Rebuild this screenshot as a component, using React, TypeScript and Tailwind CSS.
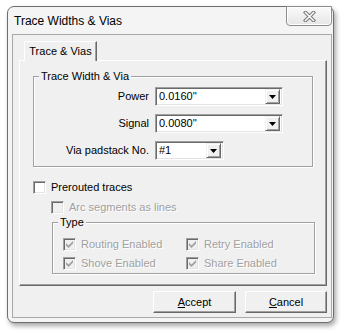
import React from "react"

const font = { fontFamily: '"Liberation Sans", Arial, sans-serif' }

const Combo = ({ value, width }: { value: string; width: string }) => (
  <div className={`${width} h-[19px] flex items-center bg-white border border-t-[#a0a0a0] border-l-[#a0a0a0] border-r-white border-b-white shadow-[inset_1px_1px_0_#696969,inset_-1px_-1px_0_#e3e3e3] pl-[2px] pr-[2px]`}>
    <span className="flex-1 text-[11px] leading-none text-black pl-px">{value}</span>
    <div className="w-[15px] h-[15px] flex items-center justify-center bg-[#f0f0f0] border border-t-[#f0f0f0] border-l-[#f0f0f0] border-r-[#696969] border-b-[#696969] shadow-[inset_1px_1px_0_#fff,inset_-1px_-1px_0_#a0a0a0]">
      <svg width="7" height="4" viewBox="0 0 7 4">
        <path d="M0 0h7L3.5 4z" fill="#000" />
      </svg>
    </div>
  </div>
)

const Check = ({ label, checked, disabled }: { label: string; checked?: boolean; disabled?: boolean }) => (
  <div className="flex items-center h-[13px] gap-[5px]">
    <div className={`w-[13px] h-[13px] border border-t-[#a0a0a0] border-l-[#a0a0a0] border-r-white border-b-white shadow-[inset_1px_1px_0_#696969,inset_-1px_-1px_0_#e3e3e3] flex items-center justify-center ${disabled ? "bg-[#f0f0f0]" : "bg-white"}`}>
      {checked && (
        <svg width="7" height="7" viewBox="0 0 7 7">
          <path d="M0 2l2.5 2.5L7 0v2.5L2.5 7 0 4.5z" fill={disabled ? "#a0a0a0" : "#000"} />
        </svg>
      )}
    </div>
    <span className={`text-[11px] leading-none ${disabled ? "text-[#a0a0a0] [text-shadow:1px_1px_0_#fff]" : "text-black"}`}>{label}</span>
  </div>
)

const Group = ({ title, className, children }: { title: string; className: string; children: React.ReactNode }) => (
  <div className={`relative border border-[#a0a0a0] shadow-[inset_1px_1px_0_#fff,1px_1px_0_#fff] ${className}`}>
    <span className="absolute -top-[7px] left-[5px] bg-[#f0f0f0] px-[2px] text-[11px] leading-[13px] text-black">{title}</span>
    {children}
  </div>
)

const Button = ({ children, width }: { children: React.ReactNode; width: string }) => (
  <div className={`${width} h-[22px] flex items-center justify-center bg-[#f0f0f0] border border-t-white border-l-white border-r-[#696969] border-b-[#696969] shadow-[inset_-1px_-1px_0_#a0a0a0] text-[11px] text-black`}>
    {children}
  </div>
)

export default function App() {
  return (
    <div className="w-[344px] h-[333px] bg-white pl-[7px] pt-[6px]" style={font}>
      <div className="w-[327px] h-[317px] rounded-[7px] border border-[#6e6e6e] bg-[#f4f4f4] shadow-[2px_3px_5px_rgba(0,0,0,0.35)] flex flex-col">
        {/* title bar */}
        <div className="h-[27px] flex items-start justify-between">
          <span className="pl-[6px] pt-[8px] text-[12px] leading-[13px] text-black">Trace Widths &amp; Vias</span>
          <div className="-mt-px mr-px w-[46px] h-[20px] rounded-b-[4px] border border-[#8c8c8c] bg-gradient-to-b from-[#fafafa] to-[#e6e6e6] shadow-[inset_0_0_0_1px_#fff] flex items-center justify-center">
            <svg width="13" height="11" viewBox="0 0 13 11">
              <path d="M2.5 1.5l8 8M10.5 1.5l-8 8" stroke="#7a7a7a" strokeWidth="3.6" strokeLinecap="square" />
              <path d="M2.5 1.5l8 8M10.5 1.5l-8 8" stroke="#fff" strokeWidth="1.5" strokeLinecap="square" />
            </svg>
          </div>
        </div>

        {/* client area */}
        <div className="ml-[4px] w-[320px] h-[284px] border border-[#a9a9a9] bg-[#f0f0f0] pl-[6px] pt-[6px]">
          {/* tab header */}
          <div className="relative z-10 ml-[5px] -mb-px w-[73px] h-[20px] bg-[#f0f0f0] border-l border-t border-r border-l-white border-t-white border-r-[#696969] shadow-[inset_-1px_0_0_#a0a0a0] flex items-center justify-center text-[11px] text-black">
            Trace &amp; Vias
          </div>
          {/* tab page */}
          <div className="w-[308px] h-[226px] border border-t-white border-l-white border-r-[#696969] border-b-[#696969] shadow-[inset_-1px_-1px_0_#a0a0a0] flex flex-col">
            <Group title="Trace Width & Via" className="ml-[13px] mt-[15px] w-[280px] h-[91px] flex flex-col gap-[8px] pt-[10px]">
              {[
                ["Power", "0.0160''", "w-[128px]"],
                ["Signal", "0.0080''", "w-[128px]"],
                ["Via padstack No.", "#1", "w-[69px]"],
              ].map(([label, value, w]) => (
                <div key={label} className="flex items-center gap-[6px]">
                  <span className="w-[115px] text-right text-[11px] text-black">{label}</span>
                  <Combo value={value} width={w} />
                </div>
              ))}
            </Group>

            <div className="ml-[13px] mt-[14px]">
              <Check label="Prerouted traces" />
            </div>
            <div className="ml-[31px] mt-[7px]">
              <Check label="Arc segments as lines" disabled />
            </div>

            <Group title="Type" className="ml-[32px] mt-[8px] w-[263px] h-[52px] pl-[10px] pt-[15px]">
              <div className="grid grid-cols-[123px_1fr] gap-y-[6px]">
                <Check label="Routing Enabled" checked disabled />
                <Check label="Retry Enabled" checked disabled />
                <Check label="Shove Enabled" checked disabled />
                <Check label="Share Enabled" checked disabled />
              </div>
            </Group>
          </div>

          {/* buttons */}
          <div className="mt-[5px] w-[308px] flex justify-end gap-[9px]">
            <Button width="w-[83px]">
              <span><span className="underline">A</span>ccept</span>
            </Button>
            <Button width="w-[82px]">
              <span><span className="underline">C</span>ancel</span>
            </Button>
          </div>
        </div>
      </div>
    </div>
  )
}
